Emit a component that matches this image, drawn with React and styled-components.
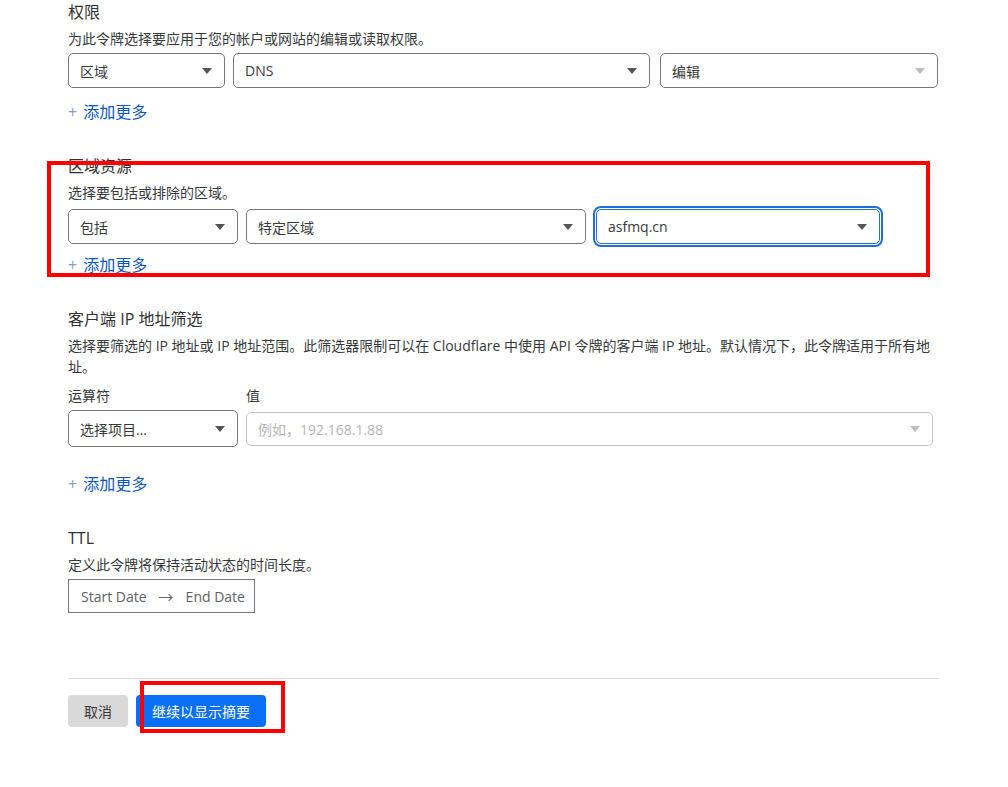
import React from "react";
import styled, { createGlobalStyle } from "styled-components";

const Global = createGlobalStyle`
  body {
    margin: 0;
    background: #ffffff;
    font-family: "Open Sans", "Noto Sans CJK SC", sans-serif;
    color: #36393a;
  }
`;

const Page = styled.div`
  width: 870px;
  padding: 0 0 60px 68px;
  position: relative;
`;

const Section = styled.section`
  position: relative;
  margin-top: ${(p) => p.top ?? 30}px;
`;

const Heading = styled.h3`
  margin: 0;
  font-size: 16px;
  line-height: 24px;
  font-weight: 400;
  color: #313131;
`;

const Desc = styled.p`
  margin: 4px 0 0;
  font-size: 14px;
  line-height: 21px;
  color: #36393a;
`;

const Row = styled.div`
  display: flex;
  align-items: center;
  margin-top: ${(p) => p.top ?? 4}px;
`;

const Select = styled.div`
  box-sizing: border-box;
  width: ${(p) => p.w}px;
  height: ${(p) => p.h || 35}px;
  margin-right: ${(p) => p.gap || 0}px;
  display: flex;
  align-items: center;
  justify-content: space-between;
  padding: 0 12px 0 11px;
  border: 1px solid ${(p) => (p.focus ? "#1f6fd6" : p.disabled ? "#c4c4c4" : "#777")};
  border-radius: 5px;
  font-size: 14px;
  color: ${(p) => (p.disabled ? "#b5b5b5" : "#36393a")};
  background: #fff;
  outline: ${(p) => (p.focus ? "2px solid #1f6fd6" : "none")};
  outline-offset: 1px;
`;

const Caret = styled.span`
  width: 0;
  height: 0;
  border-left: 5px solid transparent;
  border-right: 5px solid transparent;
  border-top: 6px solid ${(p) => (p.light ? "#bdbdbd" : "#555")};
`;

const AddMore = styled.div`
  margin-top: ${(p) => p.top ?? 12}px;
  font-size: 16px;
  line-height: 24px;
  color: #0a55c8;
  display: flex;
  align-items: center;
  gap: 6px;
`;

const Plus = styled.span`
  color: #8a9bb8;
  font-size: 16px;
`;

const Labels = styled.div`
  display: flex;
  margin-top: 8px;
  font-size: 14px;
  line-height: 21px;
  color: #36393a;
`;

const Label = styled.span`
  width: ${(p) => p.w}px;
`;

const DateBox = styled.div`
  box-sizing: border-box;
  margin-top: 4px;
  width: 187px;
  height: 34px;
  border: 1px solid #777;
  display: flex;
  align-items: center;
  padding-left: 12px;
  gap: 12px;
  font-size: 14px;
  color: #5d6066;
`;

const Arrow = styled.span`
  font-size: 15px;
  color: #666;
`;

const Divider = styled.hr`
  margin: 65px 0 0;
  border: none;
  border-top: 1px solid #d9d9d9;
`;

const Footer = styled.div`
  position: relative;
  display: flex;
  gap: 8px;
  margin-top: 16px;
`;

const Button = styled.button`
  height: 32px;
  padding: 0 16px;
  border: none;
  border-radius: 4px;
  font-family: inherit;
  font-size: 14px;
  background: ${(p) => (p.primary ? "#0a6ff7" : "#d9d9d9")};
  color: ${(p) => (p.primary ? "#ffffff" : "#36393a")};
`;

const Annotation = styled.div`
  position: absolute;
  box-sizing: border-box;
  left: ${(p) => p.x}px;
  top: ${(p) => p.y}px;
  width: ${(p) => p.w}px;
  height: ${(p) => p.h}px;
  border: 4px solid #ff0000;
  pointer-events: none;
`;

function Add({ top }) {
  return (
    <AddMore top={top}>
      <Plus>+</Plus>
      添加更多
    </AddMore>
  );
}

export default function App() {
  return (
    <Page>
      <Global />
      <Section top={0}>
        <Heading>权限</Heading>
        <Desc>为此令牌选择要应用于您的帐户或网站的编辑或读取权限。</Desc>
        <Row>
          <Select w={157} gap={8}>
            区域<Caret />
          </Select>
          <Select w={417} gap={10}>
            DNS<Caret />
          </Select>
          <Select w={278}>
            编辑<Caret light />
          </Select>
        </Row>
        <Add top={12} />
      </Section>

      <Section top={30}>
        <Heading>区域资源</Heading>
        <Desc>选择要包括或排除的区域。</Desc>
        <Row top={6}>
          <Select w={170} gap={8}>
            包括<Caret />
          </Select>
          <Select w={340} gap={10}>
            特定区域<Caret />
          </Select>
          <Select w={284} focus>
            asfmq.cn<Caret />
          </Select>
        </Row>
        <Add top={9} />
        <Annotation x={-21} y={7} w={883} h={116} />
      </Section>

      <Section top={30}>
        <Heading>客户端 IP 地址筛选</Heading>
        <Desc>
          选择要筛选的 IP 地址或 IP 地址范围。此筛选器限制可以在 Cloudflare 中使用 API 令牌的客户端 IP 地址。默认情况下，此令牌适用于所有地址。
        </Desc>
        <Labels>
          <Label w={178}>运算符</Label>
          <Label w={100}>值</Label>
        </Labels>
        <Row top={4}>
          <Select w={170} h={37} gap={8}>
            选择项目...<Caret />
          </Select>
          <Select w={687} h={34} disabled>
            例如，192.168.1.88<Caret light />
          </Select>
        </Row>
        <Add top={25} />
      </Section>

      <Section top={30}>
        <Heading>TTL</Heading>
        <Desc>定义此令牌将保持活动状态的时间长度。</Desc>
        <DateBox>
          Start Date<Arrow>→</Arrow>End Date
        </DateBox>
      </Section>

      <Divider />
      <Footer>
        <Button>取消</Button>
        <Button primary>继续以显示摘要</Button>
        <Annotation x={72} y={-14} w={145} h={52} />
      </Footer>
    </Page>
  );
}
